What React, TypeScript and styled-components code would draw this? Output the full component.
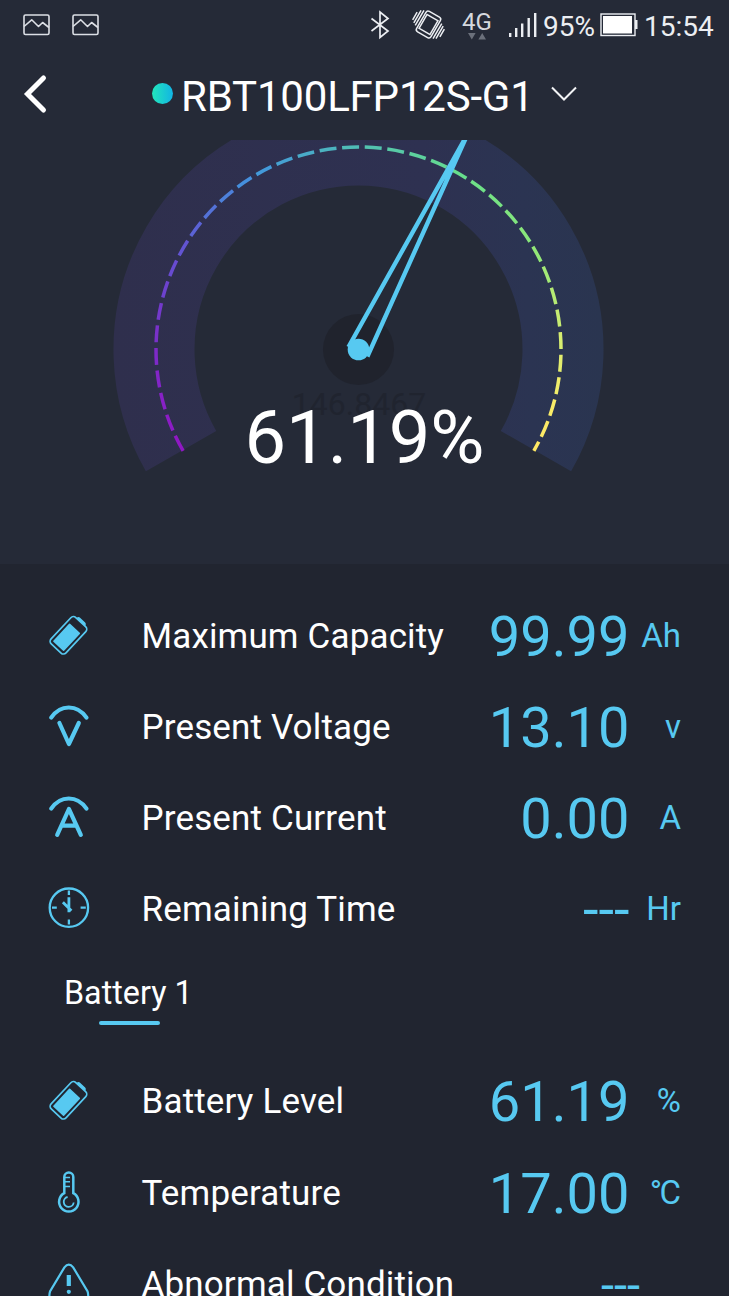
import React from 'react';
import styled, { createGlobalStyle } from 'styled-components';

const Global = createGlobalStyle`
  html, body { margin: 0; padding: 0; background: #212530; }
  body { font-family: Roboto, "Liberation Sans", sans-serif; color: #fff; overflow: hidden; }
  svg { display: block; flex: none; overflow: visible; }
`;

const ACCENT = '#57c9f1';

const Screen = styled.main`
  width: 729px;
  height: 1296px;
  overflow: hidden;
  display: flex;
  flex-direction: column;
  background: #212530;
`;

const TopPanel = styled.section`
  flex: none;
  height: 564px;
  display: flex;
  flex-direction: column;
  background: #252a37;
`;

const StatusBar = styled.div`
  height: 50px;
  box-sizing: border-box;
  padding: 0 16px 0 22px;
  display: flex;
  align-items: center;
  font-size: 28px;
  line-height: 46px;
  color: #eceef2;
`;

const Notifications = styled.div`
  display: flex;
  gap: 19.5px;
  flex: 1;
`;

const StatusText = styled.span<{ $left: number; $width: number }>`
  margin-left: ${(p) => p.$left}px;
  width: ${(p) => p.$width}px;
  white-space: nowrap;
  padding-top: 3px;
`;

const Network = styled.div`
  margin-left: 14px;
  width: 34px;
  display: flex;
  flex-direction: column;
  align-items: center;
  font-size: 24px;
  line-height: 22px;
  color: #d5d8de;
`;

const StatusIcon = styled.svg<{ $left?: number }>`
  margin-left: ${(p) => p.$left ?? 0}px;
`;

const Header = styled.header`
  height: 90px;
  display: grid;
  grid-template-columns: 151px auto 1fr;
  align-items: center;
`;

const BackButton = styled.button`
  border: 0;
  padding: 0 0 3px 22px;
  background: none;
`;

const DevicePicker = styled.div`
  display: flex;
  align-items: center;
`;

const OnlineDot = styled.i`
  width: 21px;
  height: 21px;
  margin: 0 8px 3px 1px;
  border-radius: 50%;
  background: linear-gradient(90deg, #22e6bb, #12b4e4);
`;

const DeviceName = styled.h1`
  margin: 0;
  width: 370px;
  font-size: 42px;
  line-height: 50px;
  padding-top: 4px;
  font-weight: 400;
  letter-spacing: -0.2px;
  white-space: nowrap;
`;

const GaugeArea = styled.div`
  width: 729px;
  height: 424px;
  overflow: hidden;
`;

const Details = styled.section`
  flex: none;
  padding-top: 26px;
`;

const Row = styled.div`
  height: 91.2px;
  box-sizing: border-box;
  padding: 0 48px;
  display: grid;
  grid-template-columns: 93.5px 1fr auto 51.5px;
  align-items: center;
`;

const Label = styled.span`
  font-size: 35px;
  line-height: 42px;
  letter-spacing: 0.15px;
  padding-top: 2px;
  white-space: nowrap;
`;

const Value = styled.span<{ $compact?: boolean }>`
  font-size: ${(p) => (p.$compact ? 47 : 56)}px;
  line-height: 60px;
  padding-top: 2px;
  margin-right: ${(p) => (p.$compact ? -10.5 : 0)}px;
  color: ${ACCENT};
`;

const Unit = styled.span<{ $tight?: boolean }>`
  font-size: 33px;
  line-height: 40px;
  text-align: right;
  letter-spacing: ${(p) => (p.$tight ? '-2.5px' : 'normal')};
  margin-right: ${(p) => (p.$tight ? 2.5 : 0)}px;
  color: ${ACCENT};
`;

const Tabs = styled.nav`
  height: 101px;
  display: flex;
  padding-left: 64px;
`;

const Tab = styled.div`
  display: flex;
  flex-direction: column;
  align-items: center;
  padding-top: 18px;
  font-size: 32.3px;
  line-height: 40px;
  white-space: nowrap;

  &::after {
    content: '';
    width: 61px;
    height: 4px;
    margin: 8px 0 0 3px;
    border-radius: 2px;
    background: ${ACCENT};
  }
`;

const CX = 358.5;
const CY = 209.5;

// Degrees are measured clockwise from straight up.
const polar = (r: number, deg: number) => {
  const a = (deg * Math.PI) / 180;
  return [CX + r * Math.sin(a), CY - r * Math.cos(a)];
};

const arc = (r: number, from: number, to: number) => {
  const [x1, y1] = polar(r, from);
  const [x2, y2] = polar(r, to);
  return `M${x1} ${y1}A${r} ${r} 0 ${to - from > 180 ? 1 : 0} 1 ${x2} ${y2}`;
};

const STOPS: [number, number[]][] = [
  [0, [146, 22, 196]],
  [0.13, [124, 44, 200]],
  [0.25, [98, 84, 210]],
  [0.37, [66, 150, 222]],
  [0.5, [80, 190, 180]],
  [0.63, [104, 224, 138]],
  [0.75, [142, 232, 120]],
  [0.87, [218, 238, 112]],
  [0.94, [248, 236, 104]],
  [1, [255, 230, 100]],
];

const colourAt = (t: number) => {
  const i = Math.max(1, STOPS.findIndex(([s]) => s >= t));
  const [s0, a] = STOPS[i - 1];
  const [s1, b] = STOPS[i];
  const k = (t - s0) / (s1 - s0);
  return `rgb(${a.map((v, n) => Math.round(v + (b[n] - v) * k)).join(',')})`;
};

const DASH_R = 202.5;
const STEP = (22.65 / DASH_R) * (180 / Math.PI);
const DASH = STEP * 0.75;

const Gauge = ({ percent }: { percent: number }) => {
  const sweep = (percent / 100) * 240;
  const angle = sweep - 120;
  const tip = polar(242, angle);
  const left = polar(10, angle - 90);
  const right = polar(11, angle + 90);
  const dashes = Array.from({ length: 38 }, (_, i) => -120 + i * STEP);
  return (
    <svg width="729" height="424" viewBox="0 0 729 424">
      <defs>
        <linearGradient id="band" gradientUnits="userSpaceOnUse" x1="114" y1="240" x2="603" y2="220">
          <stop offset="0" stopColor="#2f2f4d" />
          <stop offset="0.65" stopColor="#2e3151" />
          <stop offset="0.85" stopColor="#2b3452" />
          <stop offset="1" stopColor="#2a3550" />
        </linearGradient>
      </defs>
      <path d={arc(204.5, -119.8, 119.8)} fill="none" stroke="url(#band)" strokeWidth="81" />
      {dashes.map((d) => {
        const end = Math.min(d + DASH, 120);
        return (
          <path key={d} d={arc(DASH_R, d, end)} fill="none" stroke={colourAt((d + end + 240) / 480)} strokeWidth="3.5" />
        );
      })}
      <circle cx={CX} cy={CY} r="35.5" fill="#20232d" />
      <path d={`M${left}L${tip}L${right}Z`} fill="none" stroke={ACCENT} strokeWidth="4.4" />
      <circle cx={CX} cy={CY} r="10.8" fill={ACCENT} />
      <text x="359" y="275" fontSize="32" textAnchor="middle" fill="#20242f">146.8467</text>
      <text x="364.5" y="323" fontSize="74" textAnchor="middle" fill="#fff">{percent}%</text>
    </svg>
  );
};

const PictureIcon = () => (
  <svg width="29" height="24" viewBox="0 0 29 24" fill="none" stroke="#dcdfe5" strokeWidth="1.6" strokeLinejoin="round">
    <rect x="2" y="2" width="25" height="19.5" rx="1.5" />
    <path d="M2 13.5L9.7 6.8L16.5 13.5L20.6 9.5L27 14.5" />
  </svg>
);

const BatteryIcon = () => (
  <svg width="42" height="42" viewBox="0 0 42 42">
    <g transform="translate(20.7 20) rotate(43)">
      <rect x="-10.2" y="-17.6" width="20.4" height="36" rx="3.5" fill="none" stroke={ACCENT} strokeWidth="1.7" />
      <rect x="-7.4" y="-9.2" width="14.8" height="24.6" rx="0.8" fill={ACCENT} />
      <path d="M-6 -17.8Q-5.5 -20.4 -3.5 -20.4H3.5Q5.5 -20.4 6 -17.8Z" fill={ACCENT} />
    </g>
  </svg>
);

const VoltIcon = () => (
  <svg width="42" height="42" viewBox="0 0 42 42" fill="none" stroke={ACCENT} strokeWidth="4.2" strokeLinecap="round" strokeLinejoin="round">
    <path d="M3.2 11.6C12.5 -1.9 29 -1.9 38.5 11.6" />
    <path d="M11.4 17L20.9 38L30.8 17" />
  </svg>
);

const AmpIcon = () => (
  <svg width="42" height="42" viewBox="0 0 42 42" fill="none" stroke={ACCENT} strokeWidth="4.2" strokeLinecap="round" strokeLinejoin="round">
    <path d="M3.2 11.6C12.5 -1.9 29 -1.9 38.5 11.6" />
    <path d="M9.2 37.8L20.9 12L32.8 37.8M14 28.6H28" />
  </svg>
);

const ClockIcon = () => (
  <svg width="42" height="42" viewBox="0 0 42 42" fill="none" stroke={ACCENT} strokeWidth="2.3">
    <circle cx="20.9" cy="19.7" r="19.2" />
    <path d="M20.9 2.5V7M20.9 31.5V36.5M4 19.7H8.8M32.6 19.7H37.8" />
    <path d="M20.9 9.2V24.2M14.9 14.2L23.4 22.8" strokeWidth="2.8" />
  </svg>
);

const ThermometerIcon = () => (
  <svg width="42" height="42" viewBox="0 0 42 42" fill="none" stroke={ACCENT}>
    <path d="M16.3 21.2V5A4.5 4.5 0 0 1 25.3 5V21.2A9.7 9.7 0 1 1 16.3 21.2Z" strokeWidth="2.5" />
    <path d="M17 5.6H22M17 9.8H22M17 14.4H22" strokeWidth="1.5" />
    <path d="M19.6 25A5 5 0 1 0 25.7 30.5" strokeWidth="1.8" />
  </svg>
);

const WarningIcon = () => (
  <svg width="42" height="42" viewBox="0 0 42 42" fill="none" stroke={ACCENT} strokeWidth="2.2">
    <path d="M16.4 4.4Q20.8 -1.2 25.2 4.4L39.6 28.5Q42 37 35 38H6.6Q-0.4 37 2 28.5Z" />
    <path d="M20.8 12V23" strokeWidth="4.2" />
    <circle cx="20.8" cy="28.8" r="2.1" fill={ACCENT} stroke="none" />
  </svg>
);

interface Reading {
  icon: React.ReactNode;
  label: string;
  value: string;
  unit?: string;
}

const ReadingRow = ({ icon, label, value, unit }: Reading) => (
  <Row>
    {icon}
    <Label>{label}</Label>
    <Value $compact={!unit}>{value}</Value>
    <Unit $tight={unit === '°C'}>{unit}</Unit>
  </Row>
);

const summary: Reading[] = [
  { icon: <BatteryIcon />, label: 'Maximum Capacity', value: '99.99', unit: 'Ah' },
  { icon: <VoltIcon />, label: 'Present Voltage', value: '13.10', unit: 'v' },
  { icon: <AmpIcon />, label: 'Present Current', value: '0.00', unit: 'A' },
  { icon: <ClockIcon />, label: 'Remaining Time', value: '---', unit: 'Hr' },
];

const battery: Reading[] = [
  { icon: <BatteryIcon />, label: 'Battery Level', value: '61.19', unit: '%' },
  { icon: <ThermometerIcon />, label: 'Temperature', value: '17.00', unit: '°C' },
  { icon: <WarningIcon />, label: 'Abnormal Condition', value: '---' },
];

export default function App() {
  return (
    <>
      <Global />
      <Screen>
        <TopPanel>
          <StatusBar>
            <Notifications>
              <PictureIcon />
              <PictureIcon />
            </Notifications>
            <StatusIcon width="20" height="30" viewBox="0 0 20 30" fill="none" stroke="#eceef2" strokeWidth="1.7">
              <path d="M1.5 8.5L18 21L10 27.5V2L18 8.5L1.5 21" />
            </StatusIcon>
            <StatusIcon $left={22} width="34" height="32" viewBox="0 0 34 32" fill="none" stroke="#eceef2" strokeWidth="1.5">
              <g transform="translate(16.5 15.5) rotate(30)">
                <rect x="-8.3" y="-11.8" width="16.6" height="23.6" rx="2.5" />
                <rect x="-6.3" y="-8" width="12.6" height="16" />
                <path d="M-11 -10V7.5M-13.5 -8.5V6M-16 -5V4M11 10V-7.5M13.5 8.5V-6M16 5V-4" />
              </g>
            </StatusIcon>
            <Network>
              4G
              <svg width="18" height="7" viewBox="0 0 18 7" fill="#6b707b">
                <path d="M0 0H7.6L3.8 6.6ZM10.4 6.6H18L14.2 0Z" />
              </svg>
            </Network>
            <StatusIcon $left={14} width="30" height="28" viewBox="0 0 30 28" fill="#eceef2">
              <path d="M1 22h2.4v4h-2.4zM7 17h2.4v9h-2.4zM13 12.5h2.4v13.5h-2.4zM19.5 7h2.4v19h-2.4zM26 2h2.4v24h-2.4z" />
            </StatusIcon>
            <StatusText $left={5} $width={57}>95%</StatusText>
            <StatusIcon width="38" height="24" viewBox="0 0 38 24">
              <rect x="1" y="1" width="34" height="21.5" fill="none" stroke="#eceef2" strokeWidth="1.4" />
              <rect x="3" y="3" width="29" height="17.5" fill="#fff" />
              <rect x="35" y="7" width="2.5" height="9" fill="#eceef2" />
            </StatusIcon>
            <StatusText $left={6} $width={69}>15:54</StatusText>
          </StatusBar>
          <Header>
            <BackButton aria-label="Back">
              <svg width="26" height="40" viewBox="0 0 26 40" fill="none" stroke="#fff" strokeWidth="5" strokeLinecap="round" strokeLinejoin="miter">
                <path d="M21.5 4L5.5 20L21.5 36" />
              </svg>
            </BackButton>
            <DevicePicker>
              <OnlineDot />
              <DeviceName>RBT100LFP12S-G1</DeviceName>
              <svg width="26" height="18" viewBox="0 0 26 18" fill="none" stroke="#f2f3f5" strokeWidth="2">
                <path d="M1 1.5L13 13.5L25 1.5" />
              </svg>
            </DevicePicker>
          </Header>
          <GaugeArea>
            <Gauge percent={61.19} />
          </GaugeArea>
        </TopPanel>
        <Details>
          {summary.map((r) => (
            <ReadingRow key={r.label} {...r} />
          ))}
          <Tabs>
            <Tab>Battery 1</Tab>
          </Tabs>
          {battery.map((r) => (
            <ReadingRow key={r.label} {...r} />
          ))}
        </Details>
      </Screen>
    </>
  );
}
